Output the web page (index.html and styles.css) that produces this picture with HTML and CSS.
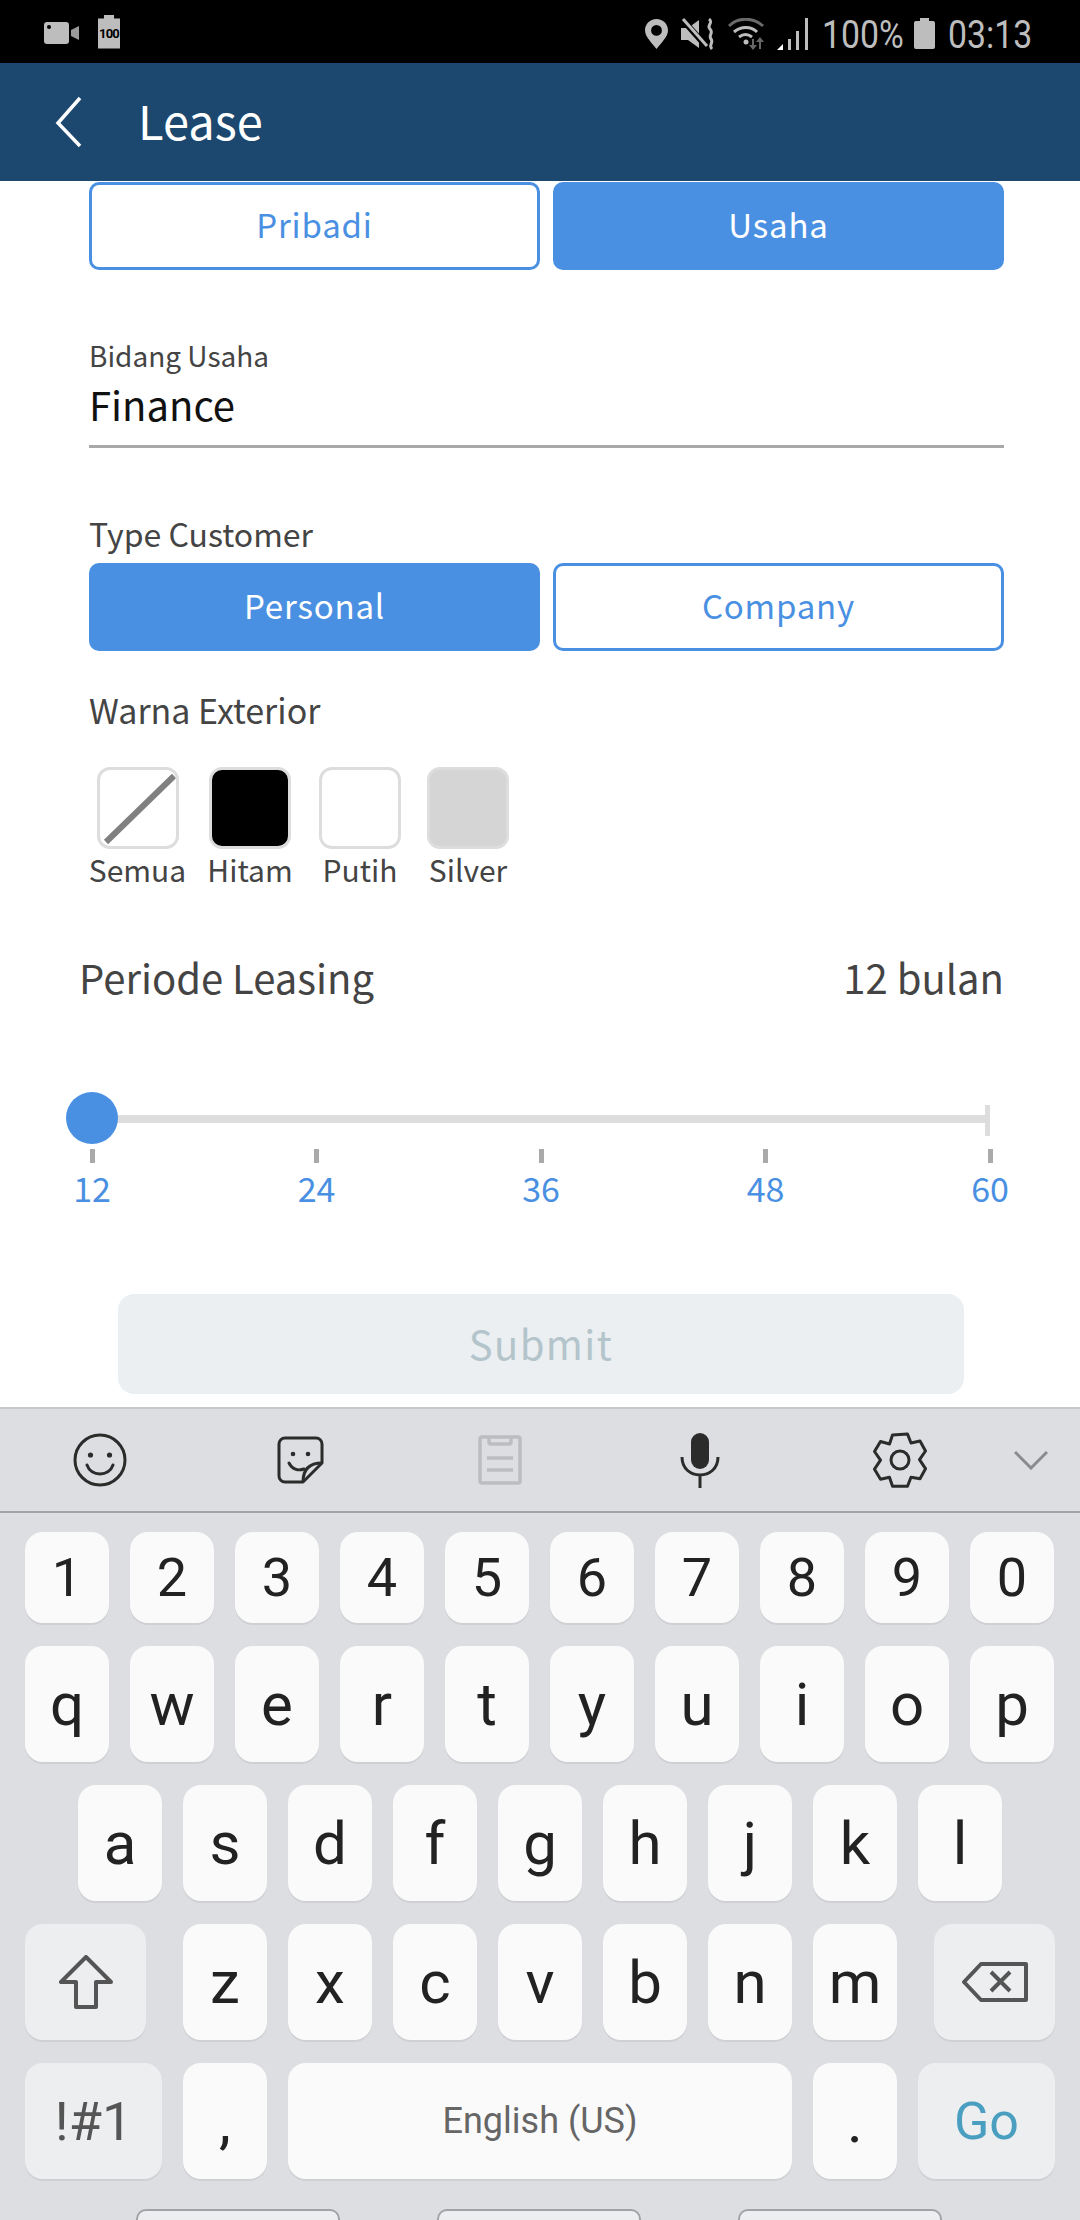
FILE: index.html
```html
<!DOCTYPE html>
<html lang="en">
<head>
  <meta charset="UTF-8" />
  <title>Lease</title>
  <link rel="stylesheet" href="styles.css">
</head>
<body>
  <div class="status-bar">
    <svg class="st-camera" viewBox="0 0 35 22"><rect x="0" y="0" width="25" height="22" rx="3" fill="#bdbdbd"/><circle cx="5" cy="5" r="2" fill="#000"/><path d="M27 8l8-4v14l-8-4z" fill="#9a9a9a"/></svg>
    <div class="st-film"><span>100</span></div>
    <div class="status-right">
      <svg class="st-pin" viewBox="0 0 23 30"><path fill-rule="evenodd" d="M11.5 0C5 0 0 5 0 11.3 0 18 7 24 11.5 30 16 24 23 18 23 11.3 23 5 18 0 11.5 0zm0 6a5.4 5.4 0 1 1 0 10.8 5.4 5.4 0 0 1 0-10.800z" fill="#bdbdbd"/></svg>
      <svg class="st-mute" viewBox="0 0 34 32"><path d="M0 10h7l11-8v28L7 22H0z" fill="#bdbdbd"/><path d="M1 1l24 27" stroke="#000" stroke-width="6"/><path d="M2 1l24 27" stroke="#bdbdbd" stroke-width="3"/><path d="M28 1c5 4-3 6 1 10s-2 6 1 10-3 6 1 10" fill="none" stroke="#bdbdbd" stroke-width="3"/></svg>
      <svg class="st-wifi" viewBox="0 0 36 32"><path d="M1 8C10-1 25-1 35 8" fill="none" stroke="#6a6a6a" stroke-width="3"/><path d="M6 14c7-6 17-6 23 0M11 19c4-3 9-3 13 0" fill="none" stroke="#bdbdbd" stroke-width="3"/><circle cx="18" cy="24" r="2.500" fill="#bdbdbd"/><path d="M24 21h2v6h3l-4 5-4-5h3z" fill="#666"/><path d="M33 31h-2v-7h-3l4-5 4 5h-3z" fill="#666"/></svg>
      <svg class="st-signal" viewBox="0 0 32 32"><path d="M0 32l6-6v6z" fill="#fff"/><path d="M11 21h3v11h-3zM19 13h3v19h-3zM28 0h3v32h-3z" fill="#bdbdbd"/></svg>
      <span class="st-text st-pct">100%</span>
      <svg class="st-batt" viewBox="0 0 21 31"><path d="M6 0h9v3h4a2 2 0 0 1 2 2v24a2 2 0 0 1-2 2H2a2 2 0 0 1-2-2V5a2 2 0 0 1 2-2h4z" fill="#bdbdbd"/></svg>
      <span class="st-text st-time">03:13</span>
    </div>
  </div>

  <div class="header">
    <svg class="back" viewBox="0 0 27 52"><path d="M25 2L3 27l22 23" fill="none" stroke="#fff" stroke-width="3.500"/></svg>
    <div class="title">Lease</div>
  </div>

  <div class="content">
    <div class="toggle-row">
      <div class="toggle">Pribadi</div>
      <div class="toggle active">Usaha</div>
    </div>

    <div class="field">
      <div class="field-label">Bidang Usaha</div>
      <div class="field-value">Finance</div>
    </div>

    <div class="section-label type-label">Type Customer</div>
    <div class="toggle-row">
      <div class="toggle active">Personal</div>
      <div class="toggle">Company</div>
    </div>

    <div class="section-label warna-label">Warna Exterior</div>
    <div class="swatches">
      <div class="swatch-item item-semua">
        <div class="swatch">
          <svg class="swatch-slash" viewBox="0 0 76 76"><path d="M6 72L74 6" stroke="#808080" stroke-width="6"/></svg>
        </div>
        <div class="swatch-name">Semua</div>
      </div>
      <div class="swatch-item item-hitam">
        <div class="swatch swatch-black"></div>
        <div class="swatch-name">Hitam</div>
      </div>
      <div class="swatch-item item-putih">
        <div class="swatch"></div>
        <div class="swatch-name">Putih</div>
      </div>
      <div class="swatch-item item-silver">
        <div class="swatch swatch-silver"></div>
        <div class="swatch-name">Silver</div>
      </div>
    </div>

    <div class="period-row">
      <div>Periode Leasing</div>
      <div>12 bulan</div>
    </div>

    <div class="slider">
      <div class="track">
        <div class="thumb"></div>
        <div class="track-end"></div>
      </div>
      <div class="scale">
        <div class="mark"><i></i><span>12</span></div>
        <div class="mark"><i></i><span>24</span></div>
        <div class="mark"><i></i><span>36</span></div>
        <div class="mark"><i></i><span>48</span></div>
        <div class="mark"><i></i><span>60</span></div>
      </div>
    </div>

    <div class="submit">Submit</div>
  </div>

  <div class="keyboard">
    <div class="kb-tools">
      <div class="tool">
        <svg width="54" height="54" viewBox="0 0 54 54" fill="none" stroke="#2b2b2b" stroke-width="3"><circle cx="27" cy="27" r="25"/><path d="M14 32c4 12 22 12 26 0" stroke-linecap="round"/><circle cx="17.500" cy="22" r="2.600" fill="#2b2b2b" stroke="none"/><circle cx="36.500" cy="22" r="2.600" fill="#2b2b2b" stroke="none"/></svg>
      </div>
      <div class="tool">
        <svg width="47" height="48" viewBox="0 0 47 48" fill="none" stroke="#2b2b2b" stroke-width="3" stroke-linejoin="round"><path d="M26 46H8a6 6 0 0 1-6-6V8a6 6 0 0 1 6-6h31a6 6 0 0 1 6 6v19z"/><path d="M45 27c-11 0-19 5-19 19"/><path d="M12 27c3 6 9 8 15 6" stroke-linecap="round"/><circle cx="16" cy="18" r="2.300" fill="#2b2b2b" stroke="none"/><circle cx="31" cy="18" r="2.300" fill="#2b2b2b" stroke="none"/></svg>
      </div>
      <div class="tool">
        <svg width="44" height="50" viewBox="0 0 44 50" fill="none" stroke="#bcbdc0" stroke-width="3.500"><rect x="2" y="2" width="40" height="46" rx="2"/><path d="M11 3v4a2 2 0 0 0 2 2h18a2 2 0 0 0 2-2V3M9 23h26M9 35h26"/></svg>
      </div>
      <div class="tool">
        <svg width="40" height="56" viewBox="0 0 40 56" fill="none" stroke="#2b2b2b" stroke-width="3"><rect x="11" y="1" width="18" height="36" rx="9" fill="#2b2b2b" stroke="none"/><path d="M2 25c0 24 36 24 36 0M20 42v14"/></svg>
      </div>
      <div class="tool">
        <svg width="54" height="56" viewBox="0 0 54 56" fill="none" stroke="#2b2b2b" stroke-width="3" stroke-linejoin="round"><path d="M34.500 2l3.500 9 9-2 5.500 10-6 8.700 6 9-5.500 10-9-1.500-3.500 9h-15l-3-9-9 2-6-10 6-9-6-8.700 6-10 9 2.500 3-9z"/><circle cx="27" cy="28" r="9"/></svg>
      </div>
      <div class="tool tool-small">
        <svg width="34" height="20" viewBox="0 0 34 20" fill="none" stroke="#8a8b8f" stroke-width="3"><path d="M1 2l16 16L33 2"/></svg>
      </div>
    </div>

    <div class="kb-keys">
      <div class="kb-row row-num">
        <div class="key">1</div><div class="key">2</div><div class="key">3</div><div class="key">4</div><div class="key">5</div><div class="key">6</div><div class="key">7</div><div class="key">8</div><div class="key">9</div><div class="key">0</div>
      </div>
      <div class="kb-row">
        <div class="key">q</div><div class="key">w</div><div class="key">e</div><div class="key">r</div><div class="key">t</div><div class="key">y</div><div class="key">u</div><div class="key">i</div><div class="key">o</div><div class="key">p</div>
      </div>
      <div class="kb-row row-home">
        <div class="key">a</div><div class="key">s</div><div class="key">d</div><div class="key">f</div><div class="key">g</div><div class="key">h</div><div class="key">j</div><div class="key">k</div><div class="key">l</div>
      </div>
      <div class="kb-row">
        <div class="key key-fn key-shift">
          <svg width="54" height="54" viewBox="0 0 54 54" fill="none" stroke="#555" stroke-width="4" stroke-linejoin="round"><path d="M27 2L2 27h15v25h20V27h15z"/></svg>
        </div>
        <div class="key">z</div><div class="key">x</div><div class="key">c</div><div class="key">v</div><div class="key">b</div><div class="key">n</div><div class="key">m</div>
        <div class="key key-fn key-del">
          <svg width="66" height="40" viewBox="0 0 66 40" fill="none" stroke="#555" stroke-width="4" stroke-linejoin="round"><path d="M19 2h45v36H19L2 20z"/><path d="M29 10l19 19M48 10L29 29"/></svg>
        </div>
      </div>
      <div class="kb-row">
        <div class="key key-fn key-sym">!#1</div>
        <div class="key key-punct">,</div>
        <div class="key key-space">English (US)</div>
        <div class="key key-punct">.</div>
        <div class="key key-fn key-go">Go</div>
      </div>
    </div>

    <div class="nav-pills">
      <div class="pill"></div>
      <div class="pill"></div>
      <div class="pill"></div>
    </div>
  </div>
</body>
</html>
```

FILE: styles.css
```css
* {
  box-sizing: border-box;
}

html, body {
  margin: 0;
  padding: 0;
}

body {
  width: 1080px;
  height: 2220px;
  overflow: hidden;
  background-color: #ffffff;
  color: #444444;
  font-family: "Noto Sans CJK KR", "Noto Sans", sans-serif;
}

/* status bar */
.status-bar {
  height: 63px;
  background-color: #000000;
  display: flex;
  align-items: center;
  padding: 2px 0 0 44px;
  color: #bdbdbd;
  font-family: Roboto, sans-serif;
}

.st-camera {
  width: 35px;
  height: 22px;
  margin-right: 19px;
}

.st-film {
  width: 22px;
  height: 34px;
  margin-top: -2px;
  background-color: #bdbdbd;
  clip-path: polygon(0 12%, 27% 12%, 27% 0, 73% 0, 73% 12%, 100% 12%, 100% 100%, 0 100%);
  color: #000;
  font-size: 13px;
  font-weight: 700;
  line-height: 38px;
  letter-spacing: -0.8px;
  text-align: center;
  white-space: nowrap;
}

.status-right {
  margin-left: auto;
  display: flex;
  align-items: center;
  gap: 13px;
  margin-top: 2px;
  padding-right: 51px;
}

.st-pin { width: 23px; height: 30px; }
.st-mute { width: 34px; height: 32px; }
.st-wifi { width: 36px; height: 32px; }
.st-signal { width: 32px; height: 32px; }
.st-batt { width: 21px; height: 31px; }

.st-text {
  display: block;
  margin-top: 2px;
  font-size: 38px;
  line-height: 44px;
  white-space: nowrap;
  transform: scaleX(0.89);
  transform-origin: left center;
}

.st-pct { width: 79px; }
.st-time { width: 81px; }

/* header */
.header {
  height: 118px;
  background-color: #1c4870;
  display: flex;
  align-items: center;
  color: #ffffff;
  padding-left: 55px;
}

.back {
  width: 27px;
  height: 52px;
}

.title {
  margin: -4px 0 0 56px;
  font-size: 47px;
  line-height: 60px;
}

/* form */
.content {
  height: 1226px;
  padding: 1px 76px 0 89px;
}

.toggle-row {
  display: flex;
  gap: 13px;
}

.toggle {
  flex: 1;
  height: 88px;
  padding-bottom: 4px;
  border: 3px solid #4a90e2;
  border-radius: 10px;
  color: #4a90e2;
  background-color: #ffffff;
  font-size: 33px;
  letter-spacing: 0.800px;
  display: flex;
  align-items: center;
  justify-content: center;
}

.toggle.active {
  background-color: #4a90e2;
  color: #ffffff;
}

.field {
  margin-top: 64px;
  border-bottom: 3px solid #a8a8a8;
  height: 114px;
}

.field-label {
  font-size: 28px;
  line-height: 42px;
}

.field-value {
  font-size: 40px;
  line-height: 56px;
  color: #111;
}

.section-label {
  line-height: 44px;
}

.type-label {
  font-size: 32px;
  margin-top: 63px;
  margin-bottom: 8px;
}

.warna-label {
  font-size: 34px;
  margin-top: 37px;
}

.swatches {
  display: flex;
  margin-top: 35px;
}

.swatch-item {
  display: flex;
  flex-direction: column;
  align-items: center;
}

.item-semua { width: 97px; }
.item-hitam { width: 82px; margin-left: 23px; }
.item-putih { width: 82px; margin-left: 28px; }
.item-silver { width: 82px; margin-left: 26px; }

.swatch {
  width: 82px;
  height: 82px;
  border: 3px solid #dddddd;
  border-radius: 13px;
  background-color: #ffffff;
  flex: none;
  overflow: hidden;
}

.swatch-slash {
  display: block;
  width: 76px;
  height: 76px;
}

.swatch-black { background-color: #000000; }
.swatch-silver { background-color: #d5d5d5; }

.swatch-name {
  margin: -2px 0 1px;
  font-size: 30px;
  line-height: 44px;
  white-space: nowrap;
}

.period-row {
  margin: 59px 0 0 -10px;
  display: flex;
  justify-content: space-between;
  font-size: 40px;
  line-height: 52px;
}

/* slider */
.slider {
  margin: 112px 0 0 3px;
  width: 898px;
}

.track {
  position: relative;
  height: 8px;
  background-color: #dddddd;
}

.thumb {
  position: absolute;
  left: -26px;
  top: -23px;
  width: 52px;
  height: 52px;
  border-radius: 50%;
  background-color: #4a90e2;
}

.track-end {
  position: absolute;
  right: 0;
  top: -10px;
  width: 5px;
  height: 31px;
  background-color: #dddddd;
}

.scale {
  display: flex;
  justify-content: space-between;
  margin-top: 26px;
}

.mark {
  width: 0;
  display: flex;
  flex-direction: column;
  align-items: center;
  color: #4a90e2;
  font-size: 34px;
  line-height: 42px;
}

.mark i {
  display: block;
  flex: none;
  width: 5px;
  height: 14px;
  background-color: #aaaaaa;
  margin-bottom: 4px;
}

.submit {
  margin: 85px 40px 0 29px;
  height: 100px;
  padding-bottom: 2px;
  border-radius: 16px;
  background-color: #ebeff2;
  color: #b4c4cb;
  font-size: 40px;
  letter-spacing: 1.400px;
  display: flex;
  align-items: center;
  justify-content: center;
}

/* keyboard */
.keyboard {
  height: 813px;
  background-color: #dddee2;
  border-top: 2px solid #c8c8c8;
  overflow: hidden;
  font-family: Roboto, sans-serif;
  color: #222222;
}

.kb-tools {
  height: 104px;
  border-bottom: 2px solid #a2a3a7;
  display: flex;
  align-items: center;
}

.tool {
  width: 200px;
  display: flex;
  justify-content: center;
}

.tool-small {
  width: 62px;
}

.kb-keys {
  padding: 19px 25px 0;
  display: flex;
  flex-direction: column;
  gap: 23px;
}

.kb-row {
  display: flex;
  gap: 21px;
  height: 116px;
}

.row-num {
  height: 91px;
}

.row-home {
  padding-left: 53px;
}

.key {
  width: 84px;
  flex: none;
  display: flex;
  align-items: center;
  justify-content: center;
  border-radius: 18px;
  background-color: #fafafa;
  box-shadow: 0 2px 0 #cfd0d4;
  font-size: 60px;
}

.row-num .key {
  font-size: 54px;
}

.key-fn {
  background-color: #eceef0;
}

.key-shift { width: 121px; margin-right: 16px; }
.key-del { width: 121px; margin-left: 16px; }

.key-sym {
  width: 137px;
  font-size: 54px;
  color: #555555;
}

.key-space {
  width: 504px;
  font-size: 36px;
  color: #666666;
}

.key-go {
  width: 137px;
  font-size: 52px;
  color: #4a9fc0;
}

.key-punct {
  font-size: 60px;
}

.nav-pills {
  display: flex;
  padding: 30px 0 0 136px;
  gap: 97px;
}

.pill {
  width: 204px;
  height: 40px;
  border: 2px solid #a2a3a7;
  border-radius: 10px;
  background-color: #eceef0;
}
```
